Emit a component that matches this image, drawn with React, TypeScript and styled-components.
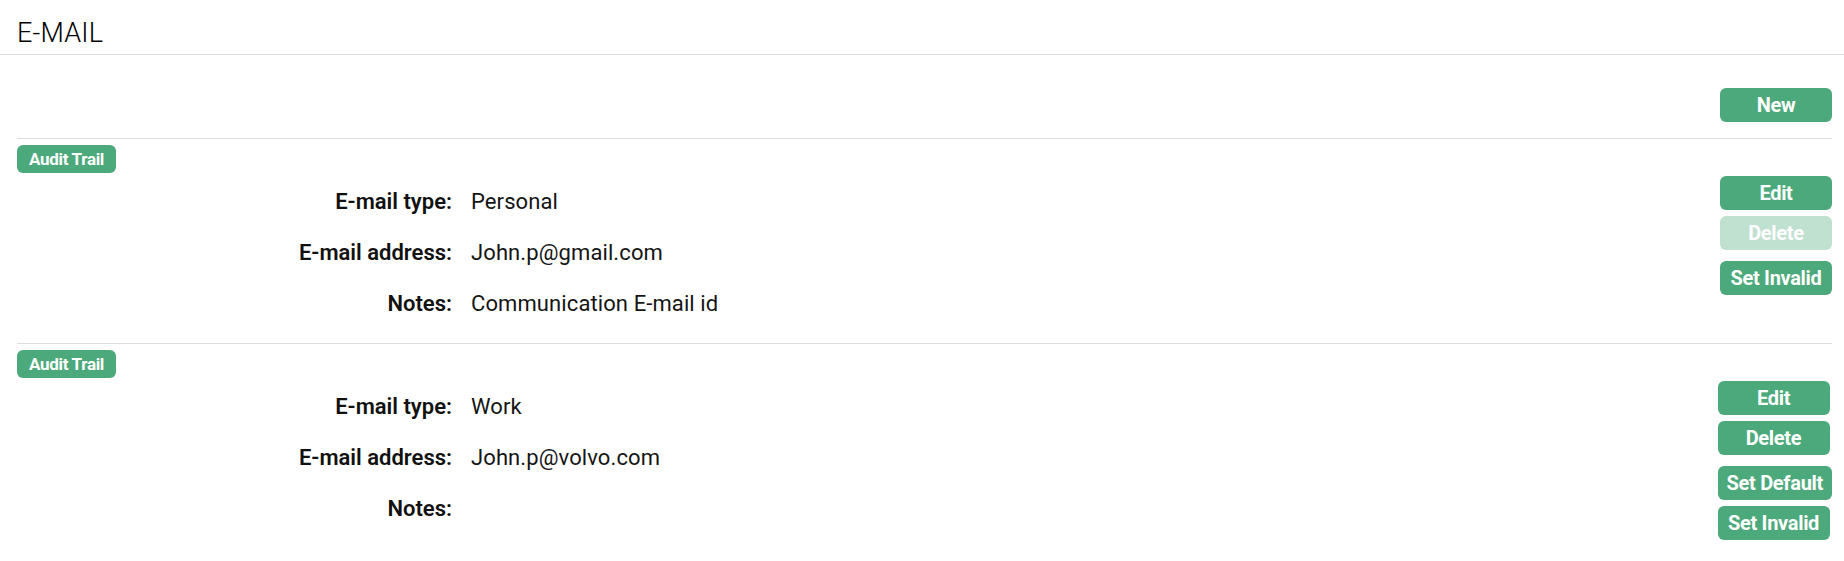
import React from "react";
import styled, { createGlobalStyle } from "styled-components";

const GlobalStyle = createGlobalStyle`
  html, body {
    margin: 0;
    padding: 0;
    background: #ffffff;
  }
  body {
    font-family: Roboto, "Noto Sans", "Liberation Sans", sans-serif;
    color: #111111;
  }
  * { box-sizing: border-box; }
`;

const GREEN = "#4ca97b";

const Page = styled.div`
  width: 100%;
`;

const Header = styled.header`
  height: 55px;
  padding: 20px 17px 0;
  border-bottom: 1px solid #dddddd;
`;

const Title = styled.h1`
  margin: 0;
  font-size: 27px;
  line-height: 27px;
  font-weight: 300;
  color: #000000;
  letter-spacing: 0.2px;
`;

const Section = styled.section`
  padding: 0 12px 0 17px;
`;

const Toolbar = styled.div`
  display: flex;
  justify-content: flex-end;
  padding: 33px 0 16px;
`;

const Button = styled.button<{ $faded?: boolean }>`
  display: inline-flex;
  align-items: center;
  justify-content: center;
  height: 34px;
  min-width: 112px;
  padding: 0 9px;
  border: none;
  border-radius: 6px;
  background: ${GREEN};
  color: #ffffff;
  font-family: Roboto, "Noto Sans", sans-serif;
  font-size: 20px;
  font-weight: 700;
  letter-spacing: -0.3px;
  cursor: pointer;
  opacity: ${(p) => (p.$faded ? 0.35 : 1)};
`;

const AuditButton = styled.button`
  display: inline-flex;
  align-items: center;
  justify-content: center;
  height: 28px;
  width: 99px;
  padding: 0;
  border: none;
  border-radius: 6px;
  background: ${GREEN};
  color: #ffffff;
  font-family: Roboto, "Noto Sans", sans-serif;
  font-size: 17px;
  font-weight: 700;
  letter-spacing: -0.3px;
  cursor: pointer;
`;

const Record = styled.article`
  border-top: 1px solid #dddddd;
  padding: 6px 0 14px;
`;

const RecordBody = styled.div`
  display: flex;
  justify-content: space-between;
  align-items: flex-start;
  margin-top: 3px;
`;

const Fields = styled.dl`
  margin: 0;
  display: grid;
  grid-template-columns: 435px auto;
  grid-auto-rows: 51px;
  column-gap: 19px;
  font-size: 22px;
  line-height: 51px;
`;

const Label = styled.dt`
  margin: 0;
  text-align: right;
  font-weight: 600;
  color: #111111;
`;

const Value = styled.dd`
  margin: 0;
  font-weight: 400;
  color: #151515;
  letter-spacing: 0.1px;
`;

const Actions = styled.div`
  display: flex;
  flex-direction: column;
  align-items: flex-start;
  gap: 11px;
`;

const ActionGroup = styled.div`
  display: flex;
  flex-direction: column;
  align-items: flex-start;
  gap: 6px;
`;

type EmailRecord = {
  type: string;
  address: string;
  notes: string;
  canDelete: boolean;
  canSetDefault: boolean;
};

const records: EmailRecord[] = [
  {
    type: "Personal",
    address: "John.p@gmail.com",
    notes: "Communication E-mail id",
    canDelete: false,
    canSetDefault: false,
  },
  {
    type: "Work",
    address: "John.p@volvo.com",
    notes: "",
    canDelete: true,
    canSetDefault: true,
  },
];

export default function App() {
  return (
    <Page>
      <GlobalStyle />
      <Header>
        <Title>E-MAIL</Title>
      </Header>
      <Section>
        <Toolbar>
          <Button>New</Button>
        </Toolbar>
        {records.map((r) => (
          <Record key={r.address}>
            <AuditButton>Audit Trail</AuditButton>
            <RecordBody>
              <Fields>
                <Label>E-mail type:</Label>
                <Value>{r.type}</Value>
                <Label>E-mail address:</Label>
                <Value>{r.address}</Value>
                <Label>Notes:</Label>
                <Value>{r.notes}</Value>
              </Fields>
              <Actions>
                <ActionGroup>
                  <Button>Edit</Button>
                  <Button $faded={!r.canDelete}>Delete</Button>
                </ActionGroup>
                <ActionGroup>
                  {r.canSetDefault && <Button>Set Default</Button>}
                  <Button>Set Invalid</Button>
                </ActionGroup>
              </Actions>
            </RecordBody>
          </Record>
        ))}
      </Section>
    </Page>
  );
}
